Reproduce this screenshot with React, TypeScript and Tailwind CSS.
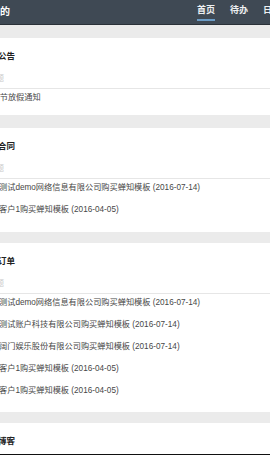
const FONT = "font-['Liberation_Sans','Noto_Sans_CJK_SC',sans-serif]";

interface SectionProps {
  title: string;
  items: string[];
  pb: string;
  offset?: string;
  grow?: boolean;
}

function Section({ title, items, pb, offset = "-ml-[1px]", grow }: SectionProps) {
  return (
    <div className={`bg-white ${pb} ${grow ? "flex-1 min-h-0 overflow-hidden" : ""}`}>
      {/* Title */}
      <div className="h-[36px] flex items-center">
        <span className="-ml-[19px] text-[8.5px] font-bold text-[#222] leading-[12px] whitespace-nowrap">
          {title}
        </span>
      </div>

      {/* Column header */}
      <div className="h-[15px] border-b border-[#e6e6e6]">
        <span className="block -ml-[12px] text-[8px] leading-[10px] text-[#c8c8c8] whitespace-nowrap">
          标题
        </span>
      </div>

      {/* Rows */}
      <ul className="pt-[1px]">
        {items.map((item, i) => (
          <li key={i} className="h-[22px]">
            <span className={`block ${offset} text-[8.2px] leading-[16px] text-[#474747] whitespace-nowrap`}>
              {item}
            </span>
          </li>
        ))}
      </ul>
    </div>
  );
}

export default function App() {
  return (
    <div className={`${FONT} w-[270px] h-[455px] overflow-hidden flex flex-col bg-[#ebebeb]`}>
      {/* Top bar */}
      <div className="h-[25px] shrink-0 flex bg-[#3f4954] border-b border-[#2a3138]">
        <div className="flex items-center">
          <span className="-ml-[10px] text-[10px] font-bold text-white leading-[12px] whitespace-nowrap">
            我的
          </span>
        </div>
        <div className="flex-1" />
        <nav className="flex gap-[15px] -mr-[11px] text-[9px] font-bold text-[#eef0f2]">
          <div className="h-[24px] flex flex-col justify-center">
            <span className="leading-[12px] pb-[3px] border-b-2 border-[#6b9cc6] whitespace-nowrap">首页</span>
          </div>
          <div className="h-[24px] flex flex-col justify-center">
            <span className="leading-[12px] pb-[3px] border-b-2 border-transparent whitespace-nowrap">待办</span>
          </div>
          <div className="h-[24px] flex flex-col justify-center">
            <span className="leading-[12px] pb-[3px] border-b-2 border-transparent whitespace-nowrap">日志</span>
          </div>
        </nav>
      </div>

      <div className="h-[13px] shrink-0" />
      <Section title="最新公告" items={["春节放假通知"]} pb="pb-[3px]" offset="-ml-[8.5px]" />

      <div className="h-[13px] shrink-0" />
      <Section
        title="最新合同"
        items={[
          "测试demo网络信息有限公司购买蝉知模板 (2016-07-14)",
          "客户1购买蝉知模板 (2016-04-05)",
        ]}
        pb="pb-[8px]"
      />

      <div className="h-[11px] shrink-0" />
      <Section
        title="最新订单"
        items={[
          "测试demo网络信息有限公司购买蝉知模板 (2016-07-14)",
          "测试账户科技有限公司购买蝉知模板 (2016-07-14)",
          "阔门娱乐股份有限公司购买蝉知模板 (2016-07-14)",
          "客户1购买蝉知模板 (2016-04-05)",
          "客户1购买蝉知模板 (2016-04-05)",
        ]}
        pb="pb-[7px]"
      />

      <div className="h-[11px] shrink-0" />
      <Section title="最新博客" items={[]} pb="" grow />

      <div className="h-[1px] shrink-0 bg-[#111]" />
    </div>
  );
}
